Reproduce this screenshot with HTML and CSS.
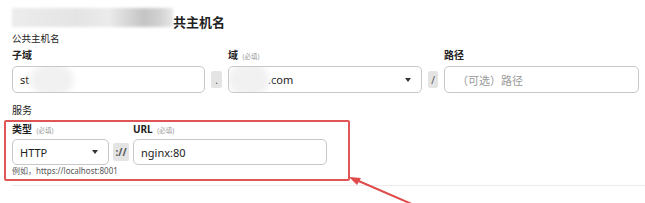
FILE: index.html
```html
<!DOCTYPE html>
<html lang="zh-CN">
  <head>
    <meta charset="UTF-8" />
    <title>公共主机名</title>
    <link rel="stylesheet" href="styles.css">
  </head>
  <body>
    <div class="page">
      <div class="title">
        <span class="mosaic"></span>
        <span>共主机名</span>
      </div>
      <div class="sub">公共主机名</div>

      <div class="host-grid">
        <div class="label">子域</div>
        <div></div>
        <div class="label">域 <span class="req">(必填)</span></div>
        <div></div>
        <div class="label">路径</div>

        <div class="field">st<span class="smudge small"></span></div>
        <div class="sep">.</div>
        <div class="field select"><span class="smudge wide"></span>.com<span class="caret"></span></div>
        <div class="sep">/</div>
        <div class="field placeholder">（可选）路径</div>
      </div>

      <div class="section">服务</div>
      <div class="service">
        <div class="service-grid">
          <div class="label">类型 <span class="req">(必填)</span></div>
          <div></div>
          <div class="label">URL <span class="req">(必填)</span></div>

          <div class="field select">HTTP<span class="caret"></span></div>
          <div class="sep wide">://</div>
          <div class="field">nginx:80</div>
        </div>
        <div class="hint">例如，https://localhost:8001</div>
      </div>
      <div class="rule"></div>
    </div>

    <svg class="arrow" width="80" height="34" viewBox="0 0 80 34">
      <line x1="10" y1="8" x2="70" y2="34" stroke="#e04a4a" stroke-width="2" />
      <polygon points="5,6 17,7 13,14" fill="#e04a4a" />
    </svg>
  </body>
</html>
```

FILE: styles.css
```css
body {
  margin: 0;
  font-family: "Noto Sans", "Noto Sans CJK SC", sans-serif;
  color: #222;
  background: white;
  position: relative;
  overflow: hidden;
  height: 203px;
}

.page {
  padding: 8px 0 0 12px;
}

.title {
  display: flex;
  align-items: center;
  height: 20px;
  margin-top: 3px;
  font-size: 13px;
  font-weight: bold;
}

.mosaic {
  width: 161px;
  height: 19px;
  margin-top: -7px;
  background: linear-gradient(90deg, #ececec 0%, #e4e4e4 40%, #ebebeb 60%, #c4c4c4 82%, #d2d2d2 92%, #e8e8e8 100%);
  filter: blur(1.5px);
}

.sub {
  font-size: 9.5px;
  line-height: 14px;
  margin-top: 1px;
}

.label {
  font-size: 10px;
  line-height: 14px;
  font-weight: bold;
}

.req {
  font-size: 6.5px;
  font-weight: normal;
  color: #999;
  margin-left: 2px;
}

.host-grid {
  display: grid;
  grid-template-columns: 193px 11px 194px 10px 195px;
  column-gap: 6px;
  row-gap: 2px;
  margin-top: 2px;
}

.field {
  box-sizing: border-box;
  height: 27px;
  border: 1px solid #c8c8c8;
  border-radius: 5px;
  display: flex;
  align-items: center;
  padding: 0 7px;
  font-size: 11px;
  color: #222;
  position: relative;
  overflow: hidden;
}

.placeholder {
  color: #999;
  padding-left: 12px;
}

.select {
  padding-right: 10px;
}

.caret {
  margin-left: auto;
  width: 0;
  height: 0;
  border-left: 3px solid transparent;
  border-right: 3px solid transparent;
  border-top: 4px solid #333;
}

.smudge {
  display: inline-block;
  height: 34px;
  border-radius: 50%;
  background: #f1f1f1;
  filter: blur(3px);
}

.smudge.small {
  width: 44px;
  margin-left: 1px;
}

.smudge.wide {
  width: 42px;
  margin-left: -8px;
  margin-right: -2px;
}

.sep {
  align-self: center;
  height: 17px;
  background: #e4e4e4;
  border-radius: 2px;
  font-size: 10px;
  color: #555;
  display: flex;
  align-items: center;
  justify-content: center;
}

.section {
  font-size: 10px;
  line-height: 14px;
  margin-top: 10px;
}

.service {
  box-sizing: border-box;
  width: 346px;
  margin: 3px 0 0 -8px;
  padding: 0 0 3px 6px;
  border: 2px solid #e05555;
  border-radius: 2px;
}

.service-grid {
  display: grid;
  grid-template-columns: 97px 16px 194px;
  column-gap: 4px;
  row-gap: 1px;
}

.service-grid .field {
  height: 26px;
}

.sep.wide {
  font-weight: bold;
  height: 18px;
}

.hint {
  font-size: 8px;
  line-height: 10px;
  color: #555;
  margin-top: 1px;
}

.rule {
  height: 1px;
  background: #ececec;
  margin-top: 4px;
}

.arrow {
  position: absolute;
  left: 344px;
  top: 171px;
}
```
